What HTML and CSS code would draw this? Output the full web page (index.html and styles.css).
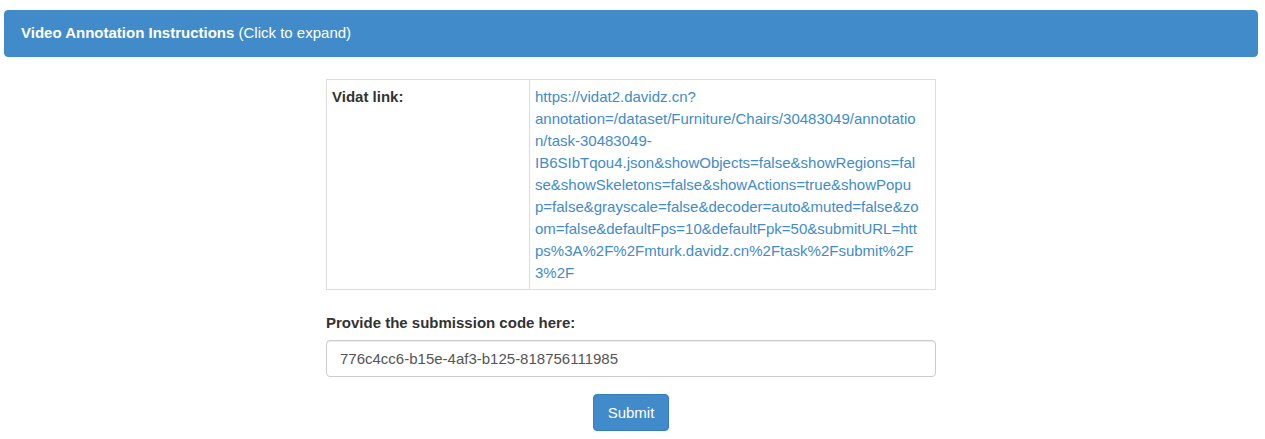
FILE: index.html
```html
<!DOCTYPE html>
<html lang="en">
<head>
<meta charset="utf-8">
<title>Video Annotation</title>
<link rel="stylesheet" href="styles.css">
</head>
<body>
<button type="button" class="panel-heading"><strong>Video Annotation Instructions</strong> (Click to expand)</button>
<main class="content">
  <table class="details">
    <tr>
      <th scope="row">Vidat link:</th>
      <td><a href="#">https://vidat2.davidz.cn?<br>annotation=/dataset/Furniture/Chairs/30483049/annotatio<br>n/task-30483049-<br>IB6SIbTqou4.json&amp;showObjects=false&amp;showRegions=fal<br>se&amp;showSkeletons=false&amp;showActions=true&amp;showPopu<br>p=false&amp;grayscale=false&amp;decoder=auto&amp;muted=false&amp;zo<br>om=false&amp;defaultFps=10&amp;defaultFpk=50&amp;submitURL=htt<br>ps%3A%2F%2Fmturk.davidz.cn%2Ftask%2Fsubmit%2F<br>3%2F</a></td>
    </tr>
  </table>
  <form class="submission">
    <label for="code">Provide the submission code here:</label>
    <input id="code" type="text" value="776c4cc6-b15e-4af3-b125-818756111985">
    <button type="button" class="submit">Submit</button>
  </form>
</main>
</body>
</html>
```
FILE: styles.css
```css
* { box-sizing: border-box; }

body {
  margin: 0;
  padding: 10px 7px 0 4px;
  background: #fff;
  color: #333;
  font: 15px/22px "Helvetica Neue", "Liberation Sans", Arial, sans-serif;
}

.panel-heading {
  display: block;
  width: 100%;
  padding: 11px 16px 12px;
  border: 1px solid #428bca;
  border-radius: 4px;
  background: #428bca;
  color: #fff;
  font: inherit;
  text-align: left;
}

.content {
  width: 50%;
  max-width: 610px;
  min-width: 300px;
  margin: 22px auto 0;
}

.details {
  width: 100%;
  table-layout: fixed;
  border-collapse: collapse;
}

.details th,
.details td {
  padding: 6px 5px 5px;
  border: 1px solid #ddd;
  text-align: left;
  vertical-align: top;
}

.details th { width: 33.33%; }

.details a {
  color: #428bca;
  text-decoration: none;
  overflow-wrap: break-word;
}

.submission {
  display: flex;
  flex-direction: column;
  margin-top: 22px;
}

.submission label {
  margin-bottom: 6px;
  font-weight: 700;
}

.submission input {
  width: 100%;
  height: 37px;
  padding: 6px 13px;
  border: 1px solid #ccc;
  border-radius: 4px;
  box-shadow: inset 0 1px 1px rgba(0, 0, 0, 0.075);
  background: #fff;
  color: #555;
  font: inherit;
}

.submit {
  align-self: center;
  height: 37px;
  margin-top: 17px;
  padding: 6px 14px;
  border: 1px solid #357ebd;
  border-radius: 4px;
  background: #428bca;
  color: #fff;
  font: inherit;
}
```
